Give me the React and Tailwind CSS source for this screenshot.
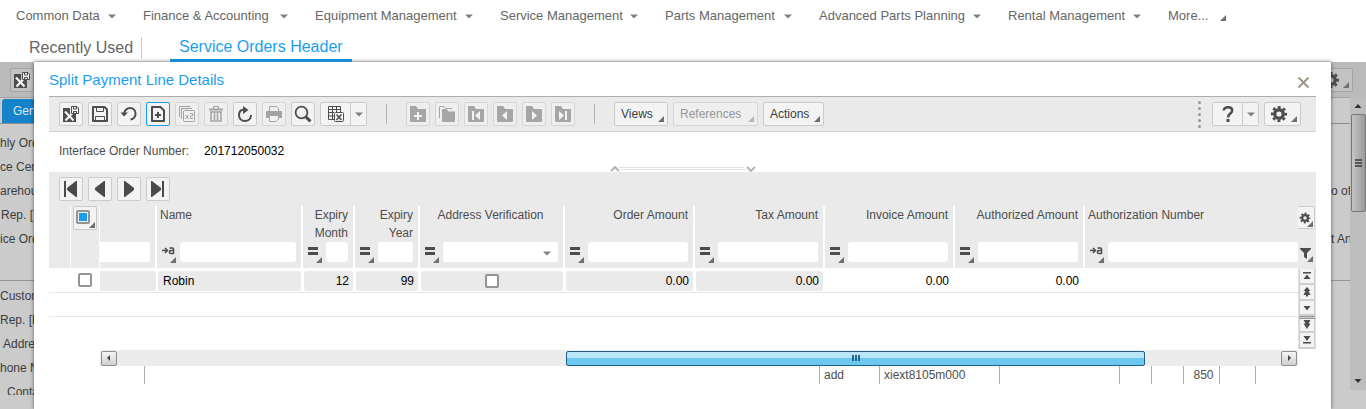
import React from "react";

const tri = "absolute right-[3px] bottom-[3px] size-[6px]";
const triTight = "absolute right-px bottom-px size-[6px]";
function Corner({ className = tri, color = "#6f6f6f" }) {
  return (
    <svg className={className} viewBox="0 0 6 6" aria-hidden="true">
      <path d="M6 0V6H0Z" fill={color} />
    </svg>
  );
}
function Caret({ className = "" }) {
  return (
    <svg className={"h-[5px] w-[8px] shrink-0 " + className} viewBox="0 0 8 5" aria-hidden="true">
      <path d="M0 0.5H8L4 4.5Z" fill="#808080" />
    </svg>
  );
}

/* All toolbar glyphs are drawn on an 18 by 18 grid */
const glyphs = {
  saveExit: (
    <>
      <path d="M1 3H8V9H14V17H1Z" fill="#4d4d4d" />
      <path d="M3 6.500L11.500 15.500M11 7.500L3.500 15.500" stroke="#f3f3f3" strokeWidth="2.200" />
      <path d="M9.500 1.500H15L16.500 3V8.500H9.500Z" fill="#f3f3f3" stroke="#4d4d4d" />
      <path d="M11.500 1.500V4H14.500V1.500M11.500 8.500V6.500H14.500V8.500" fill="none" stroke="#4d4d4d" />
    </>
  ),
  save: (
    <>
      <path d="M2 2H13.500L16 4.500V16H2Z" fill="none" stroke="#4d4d4d" strokeWidth="2" strokeLinejoin="round" />
      <path d="M5.500 2V6.500H12.500V2M4.500 16V11.500H13.500V16" fill="none" stroke="#4d4d4d" />
    </>
  ),
  undo: (
    <>
      <path d="M4 8.500C5 5 7 3 10 3C13.500 3 15.500 5.500 15.500 8.500C15.500 12 13.500 14 10.500 14.500" fill="none" stroke="#4d4d4d" strokeWidth="2" />
      <path d="M0.500 7.500H8L4 11.500Z" fill="#4d4d4d" />
    </>
  ),
  add: (
    <>
      <path d="M3 2H11.500L15 5.500V16H3Z" fill="none" stroke="#4d4d4d" strokeWidth="2" strokeLinejoin="round" />
      <path d="M9 7V13M6 10H12" stroke="#4d4d4d" strokeWidth="2" />
    </>
  ),
  copy: (
    <>
      <path d="M1.500 12V1.500H12M3.500 14V3.500H14" fill="none" stroke="#a3a3a3" />
      <rect x="5.500" y="5.500" width="11" height="11" rx="1" fill="none" stroke="#a3a3a3" />
      <path d="M7.500 10L10.500 14M10.500 10L7.500 14M12 8.500H14.500V11H12.500V13.500H15" fill="none" stroke="#a3a3a3" />
    </>
  ),
  trash: (
    <>
      <path d="M6.500 4V1.500H11.500V4" fill="none" stroke="#a3a3a3" />
      <path d="M2 3.500H16V5.500H2Z" fill="#a3a3a3" />
      <path d="M4 7H14V16H4ZM7.500 8V15M10.500 8V15" fill="none" stroke="#a3a3a3" strokeWidth="1.500" />
    </>
  ),
  refresh: (
    <>
      <path d="M7.500 4.500C4.500 5 3 7 3 10C3 13.500 5.500 16 9 16C12.500 16 15 13.500 15 10" fill="none" stroke="#4d4d4d" strokeWidth="2" />
      <path d="M7 1L12.500 5L7 9Z" fill="#4d4d4d" />
    </>
  ),
  print: (
    <>
      <path d="M4.500 6V1.500H11.500L13.500 3.500V6" fill="#eee" stroke="#a3a3a3" />
      <path d="M1 7Q1 6 2 6H16Q17 6 17 7V13H1Z" fill="#a3a3a3" />
      <path d="M4.500 10.500H13.500V14L11 16.500H4.500Z" fill="#f3f3f3" stroke="#a3a3a3" />
    </>
  ),
  search: (
    <>
      <circle cx="7.500" cy="7.500" r="5.900" fill="none" stroke="#4d4d4d" strokeWidth="1.800" />
      <path d="M11.800 11.800L16.500 16.300" stroke="#4d4d4d" strokeWidth="3" />
    </>
  ),
  sheet: (
    <>
      <path d="M1.500 1.500H13.500V7M1.500 1.500V14.500H7M1.500 4.500H13.500M1.500 7.500H7M1.500 11H7M5.500 1.500V14.500M9.500 1.500V7" fill="none" stroke="#4d4d4d" />
      <rect x="7.500" y="7.500" width="9" height="9" rx="1" fill="#f3f3f3" stroke="#4d4d4d" />
      <path d="M9.500 9.500L14.500 15M14.500 9.500L9.500 15" stroke="#4d4d4d" strokeWidth="1.500" />
    </>
  ),
  help: (
    <>
      <path d="M4.800 5.500C5 1 13.200 1 13.200 5.500C13.200 8.500 9 8.500 9 12.500" fill="none" stroke="#4d4d4d" strokeWidth="2.500" />
      <rect x="7.500" y="14" width="3" height="3" fill="#4d4d4d" />
    </>
  ),
  gear: (
    <>
      <circle cx="9" cy="9" r="4.300" fill="none" stroke="#4d4d4d" strokeWidth="3.400" />
      <circle cx="9" cy="9" r="6.900" fill="none" stroke="#4d4d4d" strokeWidth="2.400" strokeDasharray="2.900 2.519" strokeDashoffset="1.450" />
    </>
  ),
};
const folder = "M1 1H7L9 4H17V16Q17 17 16 17H2Q1 17 1 16Z";
function folderGlyph(mark) {
  return (
    <>
      <path d={folder} fill="#a6a6a6" />
      <path d={mark} fill="#f3f3f3" />
    </>
  );
}
Object.assign(glyphs, {
  folderAdd: folderGlyph("M8 7H10V10H13V12H10V15H8V12H5V10H8Z"),
  folders: (
    <>
      <path d="M1.500 13V1.500H6L8 3.500H14" fill="none" stroke="#a6a6a6" />
      <path d="M4 4H8.500L10.500 6.500H17V16Q17 17 16 17H5Q4 17 4 16Z" fill="#a6a6a6" />
    </>
  ),
  folderFirst: folderGlyph("M5 6H7V15H5ZM13 6V15L8 10.500Z"),
  folderPrev: folderGlyph("M11 6V15L6 10.500Z"),
  folderNext: folderGlyph("M7 6V15L12 10.500Z"),
  folderLast: folderGlyph("M5 6V15L10 10.500ZM11 6H13V15H11Z"),
  first: <path d="M2 1H4V17H2ZM15 1V17H14L5 10V8L14 1Z" fill="#4a4a4a" />,
  prev: <path d="M14 1V17H13L4 10V8L13 1Z" fill="#4a4a4a" />,
  next: <path d="M4 1V17H5L14 10V8L5 1Z" fill="#4a4a4a" />,
  last: <path d="M2 1V17H3L12 10V8L3 1ZM13 1H15V17H13Z" fill="#4a4a4a" />,
});
function Glyph({ name }) {
  return (
    <svg className="size-[18px] shrink-0" viewBox="0 0 18 18" aria-hidden="true">
      {glyphs[name]}
    </svg>
  );
}

const btn = "relative flex h-[24px] shrink-0 items-center border ";
const tones = {
  normal: "border-[#cbcbcb] bg-[#f3f3f3] ",
  active: "border-[#1a9ff0] bg-[#f3f3f3] ",
  muted: "border-[#d6d6d6] bg-[#efefef] ",
};
function IconButton({ name, label, tone = "normal" }) {
  return (
    <button type="button" aria-label={label} className={btn + tones[tone] + "w-[24px] justify-center rounded-[2px]"}>
      <Glyph name={name} />
    </button>
  );
}
function SplitButton({ name, label }) {
  return (
    <div className="flex">
      <button type="button" aria-label={label} className={btn + tones.normal + "w-[31px] justify-center rounded-l-[2px]"}>
        <Glyph name={name} />
      </button>
      <button type="button" aria-label={label + " options"} className={btn + tones.normal + "w-[16px] justify-center rounded-r-[2px] border-l-0"}>
        <Caret />
      </button>
    </div>
  );
}
function MenuButton({ children, width, muted }) {
  return (
    <button type="button" className={btn + (muted ? tones.muted + "text-[#979797] " : tones.normal + "text-[#3c3c3c] ") + "rounded-[2px] pl-[6px] " + width}>
      {children}
      <Corner color={muted ? "#b5b5b5" : "#6f6f6f"} />
    </button>
  );
}
function Divider() {
  return <span className="mx-[14px] h-[20px] w-px bg-[#b5b5b5]" />;
}

const menus = [
  ["Common Data", "w-[127px]"],
  ["Finance & Accounting", "w-[172px]"],
  ["Equipment Management", "w-[185px]"],
  ["Service Management", "w-[165px]"],
  ["Parts Management", "w-[154px]"],
  ["Advanced Parts Planning", "w-[189px]"],
  ["Rental Management", "w-[160px]"],
];

const columns = [
  { title: "", kind: "blank", w: "w-[57px]", value: "", shaded: true },
  { title: "Name", kind: "text", w: "w-[146px]", value: "Robin", shaded: true },
  { title: "Expiry Month", kind: "number", w: "w-[52px]", value: "12", shaded: true },
  { title: "Expiry Year", kind: "number", w: "w-[65px]", value: "99", shaded: true },
  { title: "Address Verification", kind: "check", w: "w-[145px]", shaded: true },
  { title: "Order Amount", kind: "number", w: "w-[130px]", value: "0.00", shaded: true },
  { title: "Tax Amount", kind: "number", w: "w-[130px]", value: "0.00", shaded: true },
  { title: "Invoice Amount", kind: "number", w: "w-[130px]", value: "0.00" },
  { title: "Authorized Amount", kind: "number", w: "w-[130px]", value: "0.00" },
  { title: "Authorization Number", kind: "text", w: "", value: "", last: true },
];

function FilterButton({ kind, title }) {
  return (
    <button type="button" aria-label={"Filter operator for " + title} className="h-[22px] w-[18px] shrink-0">
      <svg className="h-[22px] w-[18px]" viewBox="0 0 18 22" aria-hidden="true">
        {kind === "text" ? (
          <>
            <path d="M0 8.500H5M3 6L5.500 8.500L3 11" fill="none" stroke="#4d4d4d" strokeWidth="1.500" />
            <path d="M7.500 6H10.500Q11.500 6 11.500 7V12M11.500 8.500H8.500Q7.500 8.500 7.500 9.500V10.500Q7.500 11.500 8.500 11.500H11.500" fill="none" stroke="#4d4d4d" strokeWidth="1.500" />
          </>
        ) : (
          <path d="M0 5H10V8H0ZM0 10H10V13H0Z" fill="#4d4d4d" />
        )}
        <path d="M14 15V21H8Z" fill="#6f6f6f" />
      </svg>
    </button>
  );
}

function HeadCell({ c }) {
  const align = c.kind === "number" ? "text-right" : c.kind === "check" ? "text-center" : "text-left";
  return (
    <th scope="col" className={"h-[62px] p-0 align-top font-normal " + (c.last ? "" : "border-r-2 border-white")}>
      <div className={"h-[36px] pr-[5px] pl-[3px] leading-[18px] " + align}>{c.title}</div>
      <div className={"flex " + (c.kind === "blank" ? "pr-[5px]" : c.last ? "pl-[5px]" : "pr-[5px] pl-[5px]")}>
        {c.kind !== "blank" && <FilterButton kind={c.kind} title={c.title} />}
        {c.kind === "check" ? (
          <div className="grid min-w-0 grow">
            <select aria-label={"Filter " + c.title} className="col-start-1 row-start-1 h-[20px] w-full appearance-none rounded-[3px] bg-white" />
            <Caret className="pointer-events-none col-start-1 row-start-1 mr-[7px] self-center justify-self-end" />
          </div>
        ) : (
          <input
            aria-label={"Filter " + (c.title || "previous column")}
            className={"h-[20px] w-0 min-w-0 grow bg-white " + (c.kind === "blank" ? "rounded-r-[3px]" : c.last ? "rounded-l-[3px]" : "rounded-[3px]")}
          />
        )}
      </div>
    </th>
  );
}

const box = "block size-[14px] appearance-none rounded-[2px] border-2 border-[#949494] bg-white";

function Grid() {
  return (
    <table className="w-full table-fixed border-separate border-spacing-0">
      <colgroup>
        <col className="w-[22px]" />
        <col className="w-[29px]" />
        {columns.map((c, i) => (
          <col key={i} className={c.w} />
        ))}
      </colgroup>
      <thead className="bg-[#eaeaea] text-[#4d4d4d]">
        <tr>
          <td className="border-r border-white p-0" />
          <td className="border-r border-white p-0 align-top">
            <div className="relative ml-[2px] size-[24px] rounded-[2px] border border-[#cbcbcb] bg-[#f3f3f3] pt-[3px] pl-[2px]">
              <input type="checkbox" aria-label="Select all rows" className="block size-[14px] appearance-none rounded-[2px] border-2 border-[#949494] bg-[#1a9ff0] bg-clip-content p-px" />
              <Corner className={triTight} />
            </div>
          </td>
          {columns.map((c, i) => (
            <HeadCell key={i} c={c} />
          ))}
        </tr>
      </thead>
      <tbody className="text-black">
        <tr>
          <td className="h-[25px] border-b border-[#e8e8e8] p-0" />
          <td className="border-b border-[#e8e8e8] p-0">
            <input type="checkbox" aria-label="Select row" className={box + " ml-[7px]"} />
          </td>
          {columns.map((c, i) => (
            <td key={i} className="border-b border-[#e8e8e8] p-0">
              <div
                className={
                  "mt-[2px] flex h-[20px] items-center " +
                  (c.kind === "blank" ? "mr-px rounded-r-[3px] " : "mr-[2px] ml-px rounded-[3px] ") +
                  (c.shaded ? "bg-[#eaeaea] " : "") +
                  (c.kind === "number" ? "justify-end pr-[4px]" : c.kind === "check" ? "justify-center" : "pl-[5px]")
                }
              >
                {c.kind === "check" ? <input type="checkbox" aria-label="Address verified" className={box} /> : c.value}
              </div>
            </td>
          ))}
        </tr>
        <tr>
          <td colSpan={12} className="h-[24px] border-b border-[#e8e8e8] p-0" />
        </tr>
      </tbody>
    </table>
  );
}

const rowMoves = [
  ["First rows", "M1 1H9V2.500H1ZM5 3.500L8.500 8H1.500Z", "h-[16px]"],
  ["Previous rows", "M5 0L8.500 4H6.500L8.500 8H6V9.500H4V8H1.500L3.500 4H1.500Z", "h-[16px]"],
  ["Next row", "M1.500 3H8.500L5 7.500Z", "h-[15px]"],
  ["Next rows", "M1.500 0H8.500L6.500 3.500H8.500L5 9L1.500 3.500H3.500Z", "h-[14px]"],
  ["Last rows", "M1.500 1H8.500L5 6ZM1 7H9V8.500H1Z", "h-[16px]"],
];
function RowMove({ item }) {
  return (
    <button type="button" aria-label={item[0]} className={"flex w-[16px] items-center justify-center border-x border-b-2 border-[#cfcfcf] bg-[#f3f3f3] " + item[2]}>
      <svg className="size-[10px]" viewBox="0 0 10 10" aria-hidden="true">
        <path d={item[1]} fill="#4d4d4d" />
      </svg>
    </button>
  );
}

function ScrollArrow({ label, d }) {
  return (
    <button type="button" aria-label={label} className="flex h-[15px] w-[16px] items-center justify-center rounded-[2px] border border-[#8f8f8f] bg-linear-to-b from-[#f6f6f6] to-[#cfcfcf]">
      <svg className="size-[8px]" viewBox="0 0 8 8" aria-hidden="true">
        <path d={d} fill="#444" />
      </svg>
    </button>
  );
}

const statusCells = [
  ["", "w-[675px]"],
  ["add", "w-[60px]"],
  ["xiext8105m000", "w-[120px]"],
  ["", "w-[120px]"],
  ["", "w-[32px]"],
  ["", "w-[32px]"],
  ["850", "w-[36px]"],
  ["", "w-[36px]"],
  ["", "w-[43px]"],
];

function Dialog() {
  return (
    <section
      role="dialog"
      aria-label="Split Payment Line Details"
      className="z-10 col-start-1 row-start-1 mr-[35px] ml-[34px] bg-white px-[15px] shadow-[0_-1px_0_#b8b8b8,0_0_4px_rgba(0,0,0,0.55)]"
    >
      <header className="flex h-[34px] items-center justify-between">
        <h1 className="pt-[2px] text-[15px] leading-[18px] text-[#1a9ff0]">Split Payment Line Details</h1>
        <button type="button" aria-label="Close" className="mt-[6px] mr-[7px]">
          <svg className="size-[11px]" viewBox="0 0 11 11" aria-hidden="true">
            <path d="M0.500 0.500L10.500 10.500M10.500 0.500L0.500 10.500" stroke="#a09488" strokeWidth="2" />
          </svg>
        </button>
      </header>

      <div role="toolbar" aria-label="Record actions" className="flex h-[36px] items-center gap-[5px] border-t border-b border-t-[#adadad] border-b-[#d0d0d0] bg-[#eaeaea] px-[10px]">
        <IconButton name="saveExit" label="Save and close" />
        <IconButton name="save" label="Save" />
        <IconButton name="undo" label="Undo" />
        <IconButton name="add" label="New" tone="active" />
        <IconButton name="copy" label="Duplicate" tone="muted" />
        <IconButton name="trash" label="Delete" tone="muted" />
        <IconButton name="refresh" label="Refresh" />
        <IconButton name="print" label="Print" tone="muted" />
        <IconButton name="search" label="Find" />
        <SplitButton name="sheet" label="Export" />
        <Divider />
        <IconButton name="folderAdd" label="New group" tone="muted" />
        <IconButton name="folders" label="Copy group" tone="muted" />
        <IconButton name="folderFirst" label="First group" tone="muted" />
        <IconButton name="folderPrev" label="Previous group" tone="muted" />
        <IconButton name="folderNext" label="Next group" tone="muted" />
        <IconButton name="folderLast" label="Last group" tone="muted" />
        <Divider />
        <MenuButton width="w-[54px]">Views</MenuButton>
        <MenuButton width="w-[85px]" muted>References</MenuButton>
        <MenuButton width="w-[61px]">Actions</MenuButton>
        <span className="mr-[6px] ml-auto flex flex-col gap-[3px]">
          {[0, 1, 2, 3, 4].map((i) => (
            <span key={i} className="size-[3px] rounded-full bg-[#9c9494]" />
          ))}
        </span>
        <SplitButton name="help" label="Help" />
        <button type="button" aria-label="Settings" className={btn + tones.normal + "mr-[5px] w-[37px] rounded-[2px] pl-[5px]"}>
          <Glyph name="gear" />
          <Corner />
        </button>
      </div>

      <div className="flex h-[34px] items-center gap-[15px] px-[10px] pt-[4px]">
        <span className="text-[#4d4d4d]">Interface Order Number:</span>
        <output className="text-black">201712050032</output>
      </div>
      <svg className="mx-auto block h-[6px] w-[146px]" viewBox="0 0 146 6" aria-hidden="true">
        <path d="M1 5L5 1L9 5M137 1L141 5L145 1" fill="none" stroke="#b5b5b5" strokeWidth="2" />
        <path d="M9 1.500H134M11 3.500H136" stroke="#e0e0e0" />
      </svg>

      <div className="flex h-[34px] gap-[5px] bg-[#eaeaea] px-[10px] pt-[5px]">
        <IconButton name="first" label="First page" />
        <IconButton name="prev" label="Previous page" />
        <IconButton name="next" label="Next page" />
        <IconButton name="last" label="Last page" />
      </div>
      <div className="flex">
        <div className="min-w-0 grow">
          <Grid />
        </div>
        <div className="flex w-[18px] shrink-0 flex-col bg-[#eaeaea]">
          <button type="button" aria-label="Grid settings" className="relative h-[23px] w-[17px] rounded-r-[2px] border border-l-0 border-[#cbcbcb] bg-[#f3f3f3]">
            <svg className="ml-px size-[12px]" viewBox="0 0 18 18" aria-hidden="true">
              {glyphs.gear}
            </svg>
            <Corner className={triTight} />
          </button>
          <button type="button" aria-label="Filter" className="relative mt-[16px] mb-[6px] h-[18px] w-[16px]">
            <svg className="mb-[2px] ml-[2px] size-[11px]" viewBox="0 0 11 11" aria-hidden="true">
              <path d="M0 0H11V1L7 5V11L4 9V5L0 1Z" fill="#4d4d4d" />
            </svg>
            <Corner className={triTight} />
          </button>
          <div className="flex flex-col items-center bg-[#dedede]">
            {rowMoves.slice(0, 3).map((m) => (
              <RowMove key={m[0]} item={m} />
            ))}
            <span className="h-[3px] w-[16px] border-y border-[#999] bg-[#ccc]" />
            {rowMoves.slice(3).map((m) => (
              <RowMove key={m[0]} item={m} />
            ))}
          </div>
        </div>
      </div>

      <div className="mt-[1px] mr-[18px] ml-[51px] flex h-[16px] items-center justify-between bg-[#ececec] px-px">
        <ScrollArrow label="Scroll left" d="M5 1V7L2 4Z" />
        <div className="flex h-[15px] grow">
          <div className="ml-[38.600%] flex w-[49.700%] items-center justify-center gap-px rounded-[2px] border border-[#1d5f8f] bg-linear-to-b from-[#b9e6f8] from-50% to-[#6cc8ee] to-50%">
            <span className="h-[6px] w-[2px] bg-[#29678c]" />
            <span className="h-[6px] w-[2px] bg-[#29678c]" />
            <span className="h-[6px] w-[2px] bg-[#29678c]" />
          </div>
        </div>
        <ScrollArrow label="Scroll right" d="M3 1V7L6 4Z" />
      </div>
      <footer className="ml-[95px] flex h-[18px] text-[#4d4d4d]">
        {statusCells.map((s, i) => (
          <span key={i} className={"border-l border-[#adadad] pl-[4px] leading-[18px] " + (s[0] === "850" ? "text-center " : "") + s[1]}>
            {s[0]}
          </span>
        ))}
      </footer>
    </section>
  );
}

function Backdrop() {
  return (
    <div className="col-start-1 row-start-1 flex flex-col bg-[#cbcbcb] text-[#3c3c3c]">
      <div className="flex h-[35px] items-center justify-between bg-[#bababa] px-[10px]">
        <button type="button" aria-label="Save and close order" className="flex size-[24px] items-center justify-center rounded-[2px] border border-[#a3a3a3] bg-[#c2c2c2]">
          <Glyph name="saveExit" />
        </button>
        <button type="button" aria-label="Order settings" className="relative mr-[3px] flex h-[24px] w-[37px] items-center rounded-[2px] border border-[#a3a3a3] bg-[#c2c2c2] pl-[5px]">
          <Glyph name="gear" />
          <Corner />
        </button>
      </div>
      <div className="flex grow">
        <div className="grow">
          <div className="flex h-[27px] border-t border-b border-t-[#a3a3a3] border-b-[#8f8f8f] pt-px pl-[2px]">
            <a href="#general" className="w-[60px] rounded-t-[3px] bg-[#1483c9] pl-[11px] leading-[25px] text-[#dce8f0]">General</a>
          </div>
          <div className="flex justify-between border-b border-[#949494] pt-[7px] pb-[29px] leading-[24px] whitespace-nowrap">
            <div>
              <div>hly Ord</div>
              <div>ce Cen</div>
              <div>arehou</div>
              <div className="pl-px">Rep. [I</div>
              <div>ice Ord</div>
            </div>
            <div className="w-[19px] pt-[48px]">
              <div>o of</div>
              <div className="mt-[24px]">t An</div>
            </div>
          </div>
          <div className="pt-[3px] leading-[24px] whitespace-nowrap">
            <div>Custom</div>
            <div>Rep. [E</div>
            <div className="pl-[3px]">Addre</div>
            <div>hone N</div>
            <div className="h-[15px] overflow-hidden pl-[7px]">Conta</div>
          </div>
        </div>
        <div className="mb-[19px] flex w-[16px] flex-col items-center bg-[#bebebe] pb-[6px]">
          <svg className="my-[6px] h-[5px] w-[8px]" viewBox="0 0 8 5" aria-hidden="true">
            <path d="M0.500 5H7.500L4 1Z" fill="#333" />
          </svg>
          <div className="flex h-[98px] w-[15px] flex-col items-center justify-center gap-px rounded-[2px] border border-[#777] bg-linear-to-r from-[#c4c4c4] to-[#9b9b9f]">
            <span className="h-[2px] w-[7px] bg-[#555]" />
            <span className="h-[2px] w-[7px] bg-[#555]" />
            <span className="h-[2px] w-[7px] bg-[#555]" />
          </div>
          <svg className="mt-auto h-[5px] w-[8px]" viewBox="0 0 8 5" aria-hidden="true">
            <path d="M0.500 0H7.500L4 4Z" fill="#333" />
          </svg>
        </div>
      </div>
    </div>
  );
}

export default function App() {
  return (
    <div className="flex min-h-screen flex-col overflow-x-hidden bg-white font-['Liberation_Sans',Arial,sans-serif] text-[12px] leading-[18px]">
      <nav aria-label="Modules" className="flex h-[32px] items-center pl-[16px] text-[13px] text-[#666]">
        {menus.map(([name, w]) => (
          <a key={name} href="#module" className={"flex shrink-0 items-center justify-between pr-[27px] whitespace-nowrap " + w}>
            {name}
            <Caret />
          </a>
        ))}
        <a href="#more" className="flex items-center gap-[12px]">
          More...
          <Corner className="mt-[3px] size-[6px]" />
        </a>
      </nav>
      <div className="relative z-20 flex h-[30px] pl-[29px] text-[16px] leading-[30px]">
        <a href="#recent" className="mb-[3px] h-[22px] w-[113px] self-end border-r border-[#ccc] leading-[22px] text-[#666]">Recently Used</a>
        <a href="#orders" className="ml-[28px] w-[182px] border-b-3 border-[#1a8fd8] pl-[9px] text-[#1a9ff0]">Service Orders Header</a>
      </div>
      <main className="grid grow">
        <Backdrop />
        <Dialog />
      </main>
    </div>
  );
}
